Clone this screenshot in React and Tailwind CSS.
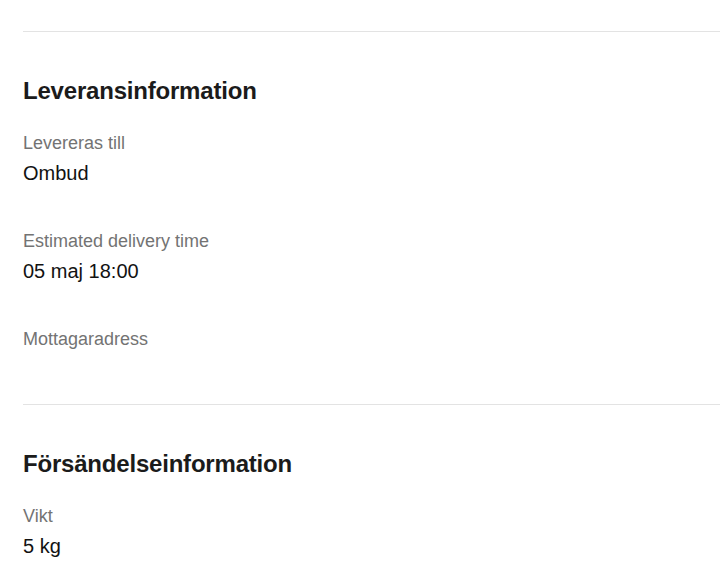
const sections = [
	{
		title: "Leveransinformation",
		fields: [
			{ label: "Levereras till", value: "Ombud" },
			{ label: "Estimated delivery time", value: "05 maj 18:00" },
			{ label: "Mottagaradress", value: "" },
		],
	},
	{
		title: "Försändelseinformation",
		fields: [{ label: "Vikt", value: "5 kg" }],
	},
];

const Field = ({ label, value }) => {
	return (
		<div className="flex flex-col gap-[4px]">
			<span className="text-[18px] leading-[24px] text-[#737373]">{label}</span>
			<span className="text-[20px] leading-[28px] text-[#121212] min-h-[28px]">{value}</span>
		</div>
	);
};

const Section = ({ title, fields }) => {
	return (
		<section className="border-t border-[#e3e3e3] pt-[43px] pb-[21px]">
			<h2 className="text-[24px] leading-[32px] font-bold text-[#1b1b1b] tracking-[-0.2px]">
				{title}
			</h2>
			<div className="flex flex-col gap-[42px] mt-[24px]">
				{fields.map((f) => (
					<Field key={f.label} label={f.label} value={f.value} />
				))}
			</div>
		</section>
	);
};

export default function App() {
	return (
		<div
			className="min-h-screen bg-white pt-[31px] pl-[23px] overflow-hidden"
			style={{ fontFamily: '"Liberation Sans", Arial, sans-serif' }}>
			{sections.map((s) => (
				<Section key={s.title} title={s.title} fields={s.fields} />
			))}
		</div>
	);
}
